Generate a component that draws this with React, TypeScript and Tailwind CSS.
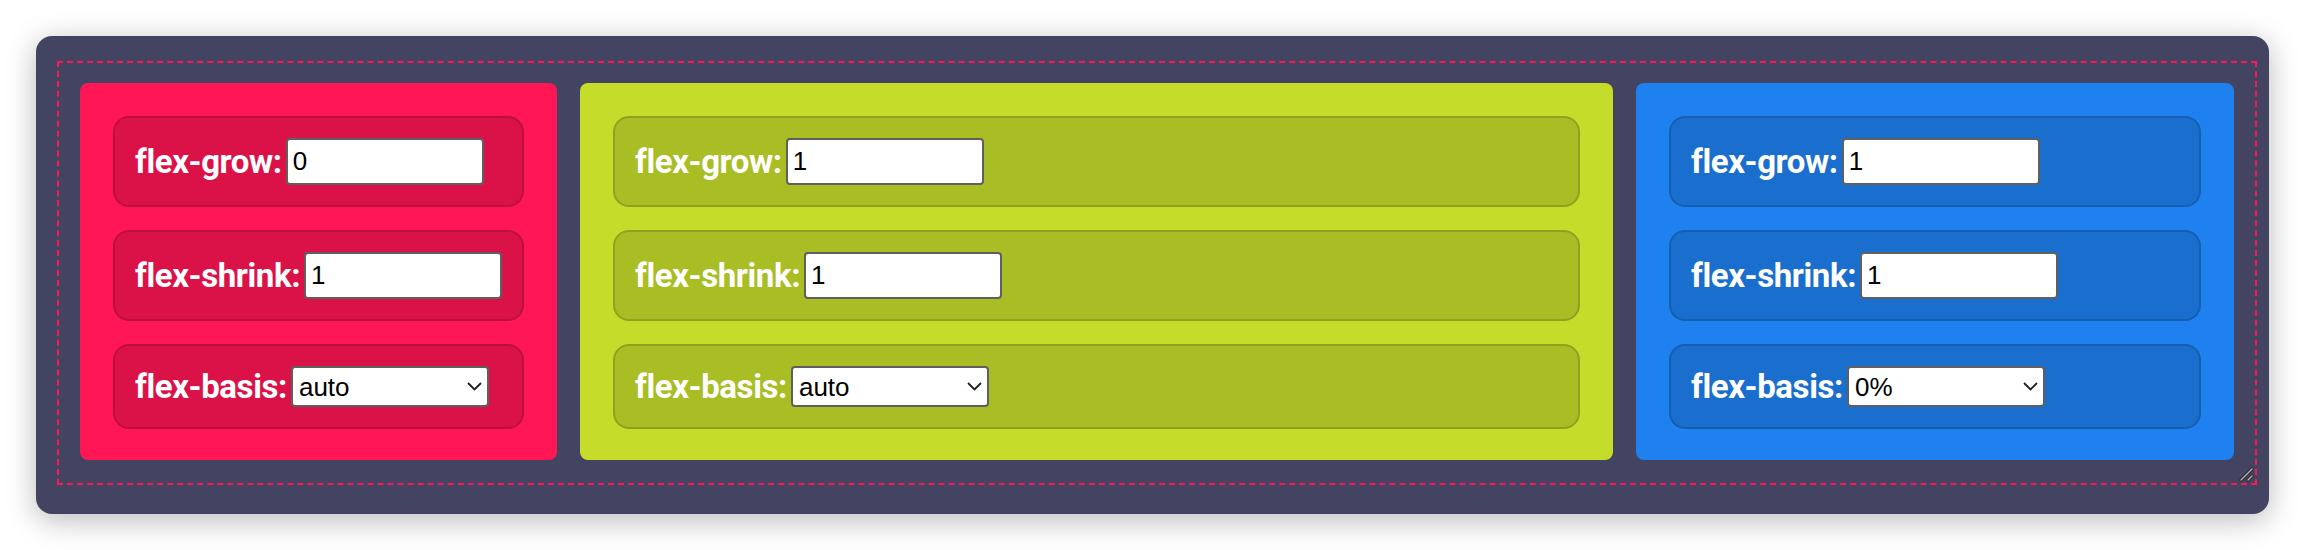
import React from "react";

type Panel = {
  bg: string;
  wrap: string;
  grow: string;
  shrink: string;
  basis: string;
};

const labelCls =
  "text-white font-bold text-[33px] leading-none whitespace-nowrap [font-family:Roboto,'Noto_Sans',sans-serif] tracking-[-0.4px]";
const fieldFont = "[font-family:'Liberation_Sans',Arial,sans-serif] text-[26px] text-black";

function Row({ children }: { children: React.ReactNode }) {
  return (
    <div className="flex items-center gap-[4px] rounded-2xl border-2 border-black/15 bg-black/[0.14] p-5">
      {children}
    </div>
  );
}

function NumInput({ value }: { value: string }) {
  return (
    <input
      type="text"
      defaultValue={value}
      className={`h-[47px] w-[198px] rounded-[4px] border-2 border-[#5f5f5f] bg-white px-[5px] outline-none ${fieldFont}`}
    />
  );
}

function Select({ value }: { value: string }) {
  return (
    <div className="relative">
      <select
        defaultValue={value}
        className={`h-[41px] w-[198px] appearance-none rounded-[4px] border-2 border-[#5f5f5f] bg-white pl-[6px] pr-[30px] outline-none ${fieldFont}`}
      >
        <option value="auto">auto</option>
        <option value="0%">0%</option>
        <option value="100px">100px</option>
      </select>
      <svg
        className="pointer-events-none absolute right-[7px] top-[16px]"
        width="15"
        height="9"
        viewBox="0 0 15 9"
        fill="none"
      >
        <path d="M1 1L7.5 7.5L14 1" stroke="#1f1f1f" strokeWidth="1.8" />
      </svg>
    </div>
  );
}

function PanelBox({ p }: { p: Panel }) {
  return (
    <div className={`${p.wrap} ${p.bg} flex flex-col gap-[23px] rounded-lg px-[33px] pt-[33px] pb-[31px]`}>
      <Row>
        <span className={labelCls}>flex-grow:</span>
        <NumInput value={p.grow} />
      </Row>
      <Row>
        <span className={labelCls}>flex-shrink:</span>
        <NumInput value={p.shrink} />
      </Row>
      <Row>
        <span className={labelCls}>flex-basis:</span>
        <Select value={p.basis} />
      </Row>
    </div>
  );
}

export default function App() {
  const panels: Panel[] = [
    { bg: "bg-[#ff1654]", wrap: "shrink-0 w-[477px]", grow: "0", shrink: "1", basis: "auto" },
    { bg: "bg-[#c5dc2b]", wrap: "shrink-0 w-[1033px]", grow: "1", shrink: "1", basis: "auto" },
    { bg: "bg-[#1f80ef]", wrap: "flex-1 min-w-0", grow: "1", shrink: "1", basis: "0%" },
  ];
  return (
    <div className="min-h-[550px] bg-white pl-[36px] pr-[37px] pt-[36px] pb-[37px]">
      <div className="rounded-2xl bg-[#434462] pl-[21px] pr-[12px] pt-[25px] pb-[29px] shadow-[0_6px_30px_rgba(0,0,0,0.28)]">
        <div className="relative flex gap-[23px] border-2 border-dashed border-[#ff1654] pl-[21px] pr-[21px] pt-[20px] pb-[23px]">
          {panels.map((p, i) => (
            <PanelBox key={i} p={p} />
          ))}
          <svg
            className="pointer-events-none absolute bottom-[1px] right-[1px]"
            width="15"
            height="15"
            viewBox="0 0 15 15"
          >
            <path d="M2 13L13 2M9 13L13 9" stroke="#2a2a2a" strokeWidth="3.2" strokeLinecap="round" />
            <path d="M2 13L13 2M9 13L13 9" stroke="#b4b4b4" strokeWidth="1.4" strokeLinecap="round" />
          </svg>
        </div>
      </div>
    </div>
  );
}
